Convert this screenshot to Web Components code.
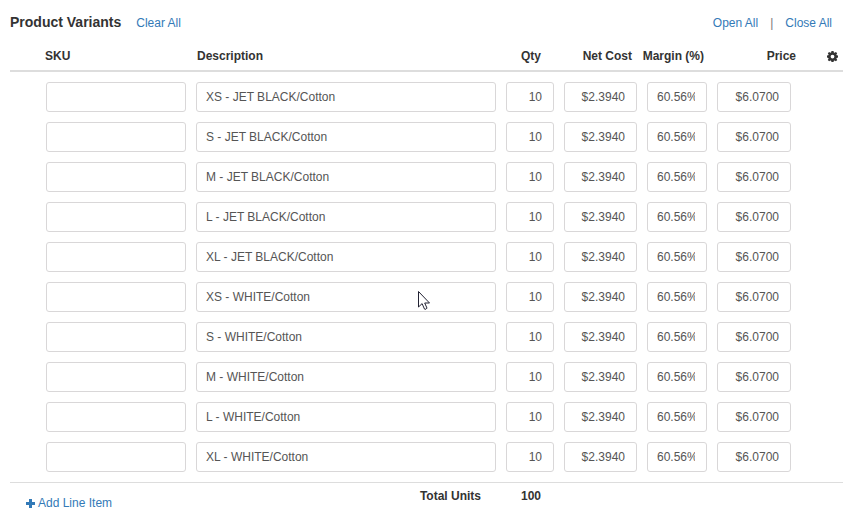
<!DOCTYPE html>
<html lang="en">
<head>
<meta charset="utf-8">
<meta name="viewport" content="width=device-width, initial-scale=1">
<title>Product Variants</title>
<style>
  body { margin: 0; background: #fff; color: #333; font: 12px/16px "Liberation Sans", Arial, sans-serif; }
  .divider { color: #777; }
</style>
</head>
<body>
<variants-panel>
  <span slot="title">Product Variants</span>
  <text-link slot="clear">Clear All</text-link>
  <text-link slot="actions">Open All</text-link>
  <span slot="actions" class="divider" aria-hidden="true">|</span>
  <text-link slot="actions">Close All</text-link>
  <variants-table></variants-table>
</variants-panel>
<mouse-pointer></mouse-pointer>

<script>
function attach(host, html) {
  const root = host.attachShadow({ mode: "open" });
  root.innerHTML = html;
  return root;
}

class TextLink extends HTMLElement {
  constructor() {
    super();
    attach(this, `
      <style>
        :host { display: inline-block; }
        a { color: #337ab7; text-decoration: none; }
        a:hover { text-decoration: underline; }
      </style>
      <a href="#"><slot></slot></a>`);
  }
}
customElements.define("text-link", TextLink);

class GlyphIcon extends HTMLElement {
  static shapes = {
    plus: '<path d="M4 1h3v3h3v3H7v3H4V7H1V4h3z"/>',
    gear: '<path fill-rule="evenodd" d="M4.500 0h2l.4 1.400.7.3L8.900 1 10.200 2.300 9.400 3.600l.3.700 1.300.300v2l-1.300.3-.3.700.8 1.300L8.900 10.200 7.600 9.400l-.7.300L6.500 11h-2l-.4-1.300-.7-.3L2.100 10.200.8 8.900l.8-1.300-.3-.7L0 6.600v-2l1.300-.3.300-.7L.8 2.300 2.100 1l1.300.7.7-.3zM5.500 3.700a1.900 1.900 0 1 0 0 3.800a1.900 1.900 0 1 0 0-3.800z"/>'
  };
  connectedCallback() {
    if (this.shadowRoot) return;
    attach(this, `
      <style>
        :host { display: inline-block; width: 11px; height: 11px; }
        svg { display: block; fill: currentColor; }
      </style>
      <svg width="11" height="11" viewBox="0 0 11 11" aria-hidden="true">${GlyphIcon.shapes[this.getAttribute("name")]}</svg>`);
  }
}
customElements.define("glyph-icon", GlyphIcon);

class VariantField extends HTMLElement {
  connectedCallback() {
    if (this.shadowRoot) return;
    const root = attach(this, `
      <style>
        :host { display: block; }
        input {
          display: block; box-sizing: border-box; width: 100%; height: 30px; margin: 0;
          padding: 4px 11px 4px 9px; border: 1px solid #d9d7d8; border-radius: 3px; background: #fff;
          color: #555; font: inherit; text-align: inherit; outline: none;
        }
        input:focus { border-color: #66afe9; }
      </style>
      <input type="text">`);
    const input = root.querySelector("input");
    input.setAttribute("aria-label", this.getAttribute("label"));
    input.value = this.getAttribute("value") || "";
  }
}
customElements.define("variant-field", VariantField);

class VariantsTable extends HTMLElement {
  constructor() {
    super();
    const rows = ["JET BLACK", "WHITE"].flatMap(colour =>
      ["XS", "S", "M", "L", "XL"].map(size => `${size} - ${colour}/Cotton`));
    const cell = (label, value, cls = "") =>
      `<td class="${cls}"><variant-field label="${label}" value="${value}"></variant-field></td>`;
    attach(this, `
      <style>
        :host { display: block; }
        table { width: 100%; border-collapse: separate; border-spacing: 0; table-layout: fixed; }
        .c-lead { width: 31px; } .c-sku { width: 150px; } .c-qty { width: 58px; }
        .c-cost { width: 83px; } .c-margin { width: 70px; } .c-price { width: 84px; } .c-tools { width: 47px; }
        th, td { padding: 5px; text-align: left; vertical-align: top; }
        .num { text-align: right; }
        thead th { padding-top: 8px; padding-bottom: 6px; border-bottom: 2px solid #ddd; white-space: nowrap; }
        thead .sku { padding-left: 4px; }
        thead .desc { padding-left: 6px; }
        .qty { padding-right: 18px; }
        .cost { padding-right: 10px; }
        .margin { padding-left: 0; padding-right: 8px; }
        .price { padding-right: 0; }
        tbody tr:first-child td { padding-top: 10px; }
        tbody tr:last-child td { padding-bottom: 10px; }
        tfoot td, tfoot th { border-top: 1px solid #ddd; }
        tfoot .add { padding: 12px 0 0 15px; }
        tfoot .total { padding-right: 20px; }
        button { display: inline-flex; align-items: center; padding: 0; border: 0; background: none; color: inherit; font: inherit; cursor: pointer; }
        .add button { gap: 2px; color: #337ab7; }
        .tools { text-align: right; }
        .tools button { height: 16px; vertical-align: top; }
      </style>
      <table>
        <colgroup>
          <col class="c-lead"><col class="c-sku"><col><col class="c-qty"><col class="c-cost">
          <col class="c-margin"><col class="c-price"><col class="c-tools">
        </colgroup>
        <thead><tr>
          <th></th><th class="sku">SKU</th><th class="desc">Description</th>
          <th class="num qty">Qty</th><th class="num cost">Net Cost</th>
          <th class="num margin">Margin (%)</th><th class="num price">Price</th>
          <th class="tools"><button type="button" aria-label="Column settings"><glyph-icon name="gear"></glyph-icon></button></th>
        </tr></thead>
        <tbody>${rows.map(name => `<tr><td></td>
          ${cell("SKU", "")}${cell("Description", name)}${cell("Qty", "10", "num")}
          ${cell("Net Cost", "$2.3940", "num")}${cell("Margin (%)", "60.56%", "num")}
          ${cell("Price", "$6.0700", "num")}<td></td></tr>`).join("")}</tbody>
        <tfoot><tr>
          <td class="add" colspan="2"><button type="button"><glyph-icon name="plus"></glyph-icon>Add Line Item</button></td>
          <th class="num total">Total Units</th><th class="num qty">100</th><td colspan="4"></td>
        </tr></tfoot>
      </table>`);
  }
}
customElements.define("variants-table", VariantsTable);

class VariantsPanel extends HTMLElement {
  constructor() {
    super();
    attach(this, `
      <style>
        :host { display: block; padding: 12px 9px 8px 10px; }
        header { display: flex; align-items: baseline; height: 28px; box-sizing: border-box; padding-right: 11px; }
        h1 { margin: 0 15px 0 0; font-size: 14px; line-height: 20px; }
        .actions { display: flex; gap: 12px; margin-left: auto; }
      </style>
      <header>
        <h1><slot name="title"></slot></h1>
        <slot name="clear"></slot>
        <div class="actions"><slot name="actions"></slot></div>
      </header>
      <slot></slot>`);
  }
}
customElements.define("variants-panel", VariantsPanel);

class MousePointer extends HTMLElement {
  constructor() {
    super();
    attach(this, `
      <style>
        :host { position: absolute; left: 418px; top: 290px; pointer-events: none; }
        svg { display: block; }
      </style>
      <svg width="13" height="21" viewBox="0 0 13 21" aria-hidden="true">
        <path d="M.5 1.500v15.500l3.600-3.400 2.400 5.500q1.500.8 2.500-1l-2.300-5.100h4.800z" fill="#fff" stroke="#223" stroke-width="1"/>
      </svg>`);
  }
}
customElements.define("mouse-pointer", MousePointer);
</script>
</body>
</html>
